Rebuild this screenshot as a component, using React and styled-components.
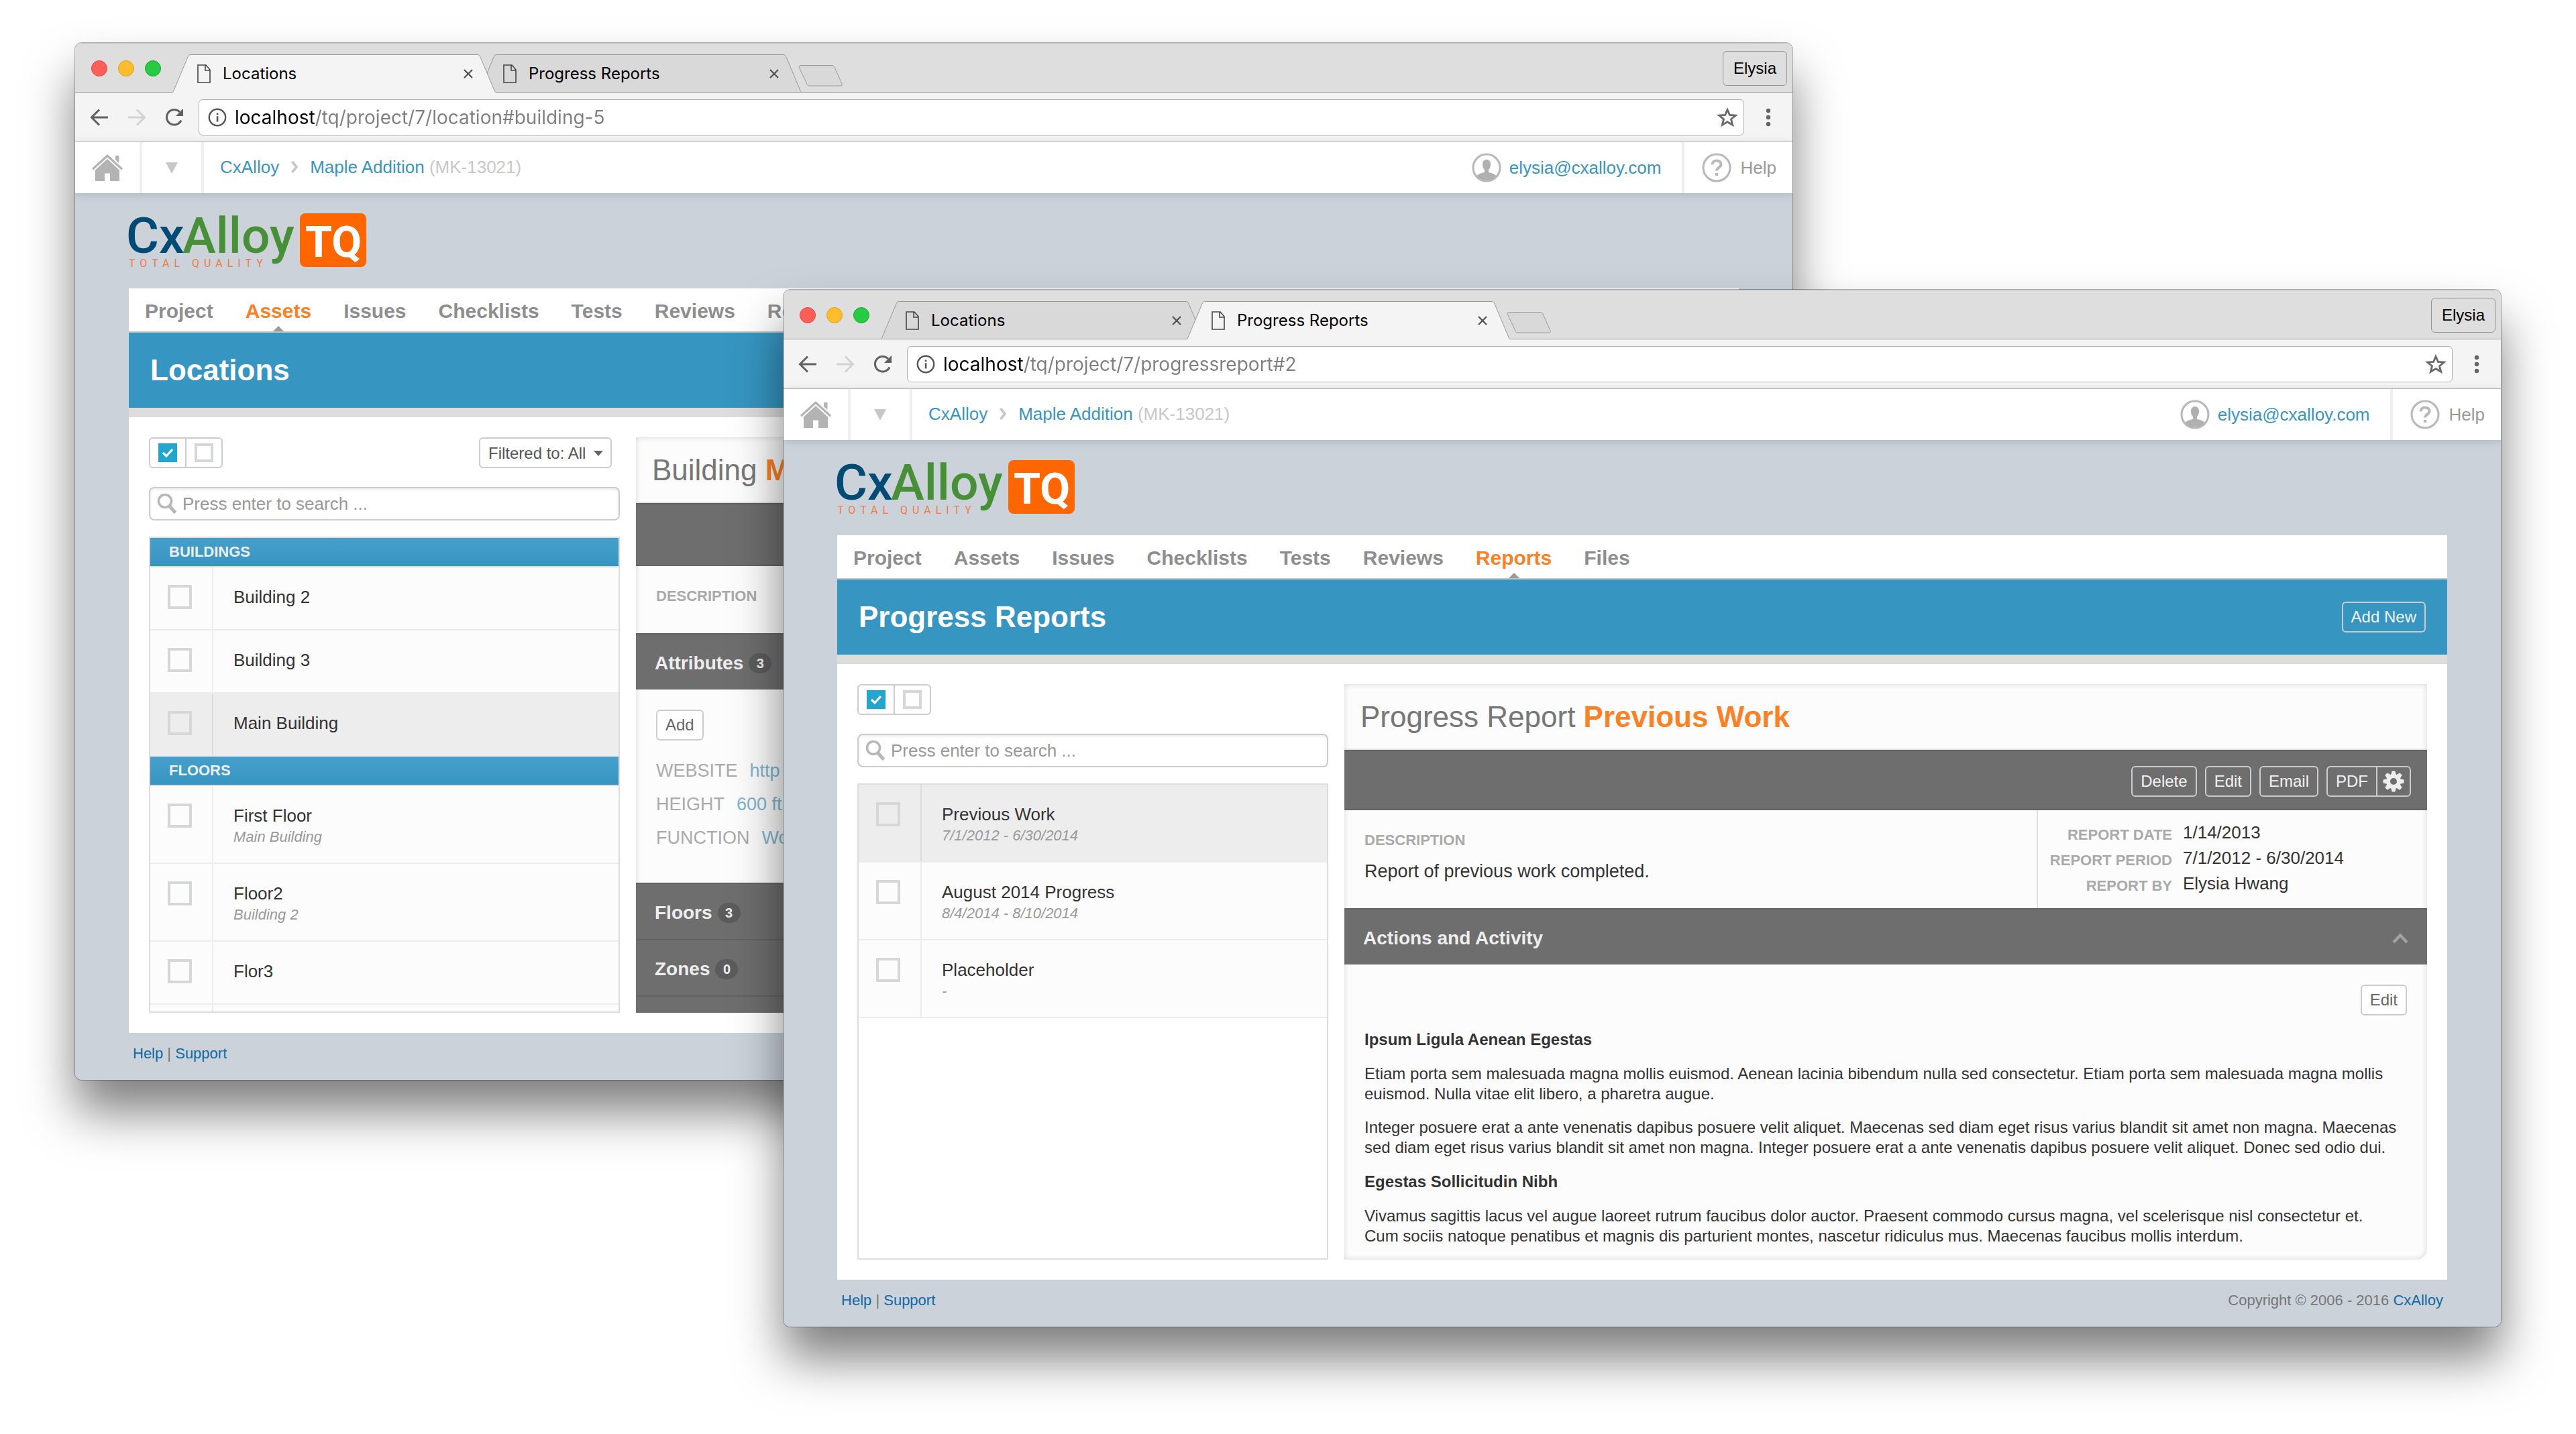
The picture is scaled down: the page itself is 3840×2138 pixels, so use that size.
import React from "react";
import styled, { createGlobalStyle, css } from "styled-components";

const GlobalStyle = createGlobalStyle`
  *, *::before, *::after { box-sizing: border-box; }
  body { margin: 0; background: #fff; }
  button, input, select { font: inherit; color: inherit; margin: 0; }
  button { padding: 0; border: 0; background: none; cursor: pointer; }
  a { color: inherit; text-decoration: none; }
  h1, h2, h3, p, ul, dl, dd { margin: 0; padding: 0; }
  svg { display: block; }
`;

const systemFont = `Inter, Roboto, sans-serif`;
const pageFont = `"Liberation Sans", Arial, sans-serif`;

/* ---------- desktop and browser window ---------- */

const Desktop = styled.main`
  position: relative;
  min-height: 100vh;
  overflow: hidden;
  font-family: ${pageFont};
`;

const BrowserFrame = styled.section`
  position: absolute;
  width: calc(100% * 2 / 3);
  top: ${(p) => (p.$front ? "432px" : "64px")};
  ${(p) => (p.$front ? "right: 112px;" : "left: 112px;")}
  border-radius: 10px;
  box-shadow: 0 0 0 1px rgba(0, 0, 0, 0.3), 0 48px 72px rgba(0, 0, 0, 0.5);
`;

const FrameClip = styled.div`
  display: flex;
  flex-direction: column;
  border-radius: 10px;
  overflow: hidden;
  background: #cbd2da;
`;

const TabStrip = styled.header`
  display: flex;
  align-items: flex-end;
  height: 74px;
  background: #dedede;
  box-shadow: inset 0 1px 0 #c4c4c4, inset 0 -1px 0 #999;
  font-family: ${systemFont};
`;

const WindowControls = styled.div`
  display: flex;
  gap: 16px;
  align-self: flex-start;
  padding: 26px 16px 0 24px;
`;

const ControlDot = styled.button`
  width: 24px;
  height: 24px;
  border-radius: 50%;
  background: ${(p) => p.$fill};
  border: 1px solid ${(p) => p.$edge};
`;

const Tabs = styled.div`
  display: flex;
`;

const TabShell = styled.div`
  position: relative;
  z-index: ${(p) => (p.$active ? 2 : 1)};
  display: flex;
  align-items: center;
  width: 484px;
  height: 57px;
  padding: 0 28px 0 38px;
  & + & { margin-left: -28px; }
`;

const TabShape = styled.svg`
  position: absolute;
  inset: 0;
  z-index: -1;
`;

const TabLabel = styled.button`
  flex: 1;
  display: flex;
  align-items: center;
  gap: 18px;
  font-size: 24px;
  line-height: 28px;
  color: #000;
`;

const IconButton = styled.button`
  display: grid;
  place-items: center;
  width: 28px;
  height: 28px;
`;

const NewTabButton = styled.button`
  margin: 0 0 9px -6px;
`;

const ProfileButton = styled.button`
  align-self: flex-start;
  margin: 12px 8px 0 auto;
  height: 52px;
  padding: 0 15px;
  border: 1px solid #979797;
  border-radius: 6px;
  font-family: ${pageFont};
  font-size: 24px;
  color: #000;
`;

const Toolbar = styled.div`
  display: flex;
  align-items: center;
  gap: 28px;
  height: 74px;
  padding: 0 22px;
  background: #f4f4f4;
  border-bottom: 1px solid #bdbdbd;
`;

const AddressBar = styled.label`
  flex: 1;
  display: flex;
  align-items: center;
  gap: 12px;
  height: 54px;
  margin: 0 -6px;
  padding: 0 8px 0 13px;
  background: #fff;
  border: 1px solid #b0b0b0;
  border-radius: 6px;
`;

const AddressInput = styled.input`
  flex: 1;
  height: 40px;
  padding: 0;
  border: 0;
  outline: 0;
  font-family: ${systemFont};
  font-size: 28px;
  color: #7f7f7f;
  background: linear-gradient(to right, #000 120px, #7f7f7f 120px);
  background-clip: text;
  -webkit-text-fill-color: transparent;
`;

/* ---------- site header ---------- */

const SiteHeader = styled.header`
  position: relative;
  z-index: 1;
  display: flex;
  height: 76px;
  background: #fff;
  box-shadow: 0 2px 12px rgba(0, 0, 0, 0.14);
  font-size: 26px;
`;

const HeaderCell = styled.button`
  display: grid;
  place-items: center;
  width: ${(p) => p.$width}px;
  border-right: 4px solid #efefef;
`;

const Breadcrumbs = styled.nav`
  display: flex;
  align-items: center;
  gap: 18px;
  padding: 0 0 2px 24px;
  color: #c8c8c8;
`;

const BlueLink = styled.a`
  color: #3696c1;
`;

const UserLink = styled(BlueLink)`
  display: flex;
  align-items: center;
  gap: 12px;
  margin-left: auto;
  padding-right: 30px;
`;

const HelpLink = styled.a`
  display: flex;
  align-items: center;
  gap: 14px;
  padding: 0 24px 0 26px;
  border-left: 4px solid #efefef;
  color: #999;
`;

/* ---------- page ---------- */

const Page = styled.div`
  padding: 30px 80px 0;
`;

const LogoMark = styled.svg`
  overflow: visible;
`;

const Content = styled.div`
  margin-top: 32px;
  background: #fff;
`;

const MainNav = styled.nav`
  display: flex;
  height: 66px;
  border-bottom: 2px solid #c4c4c4;
`;

const NavItem = styled.a`
  position: relative;
  display: flex;
  align-items: center;
  padding: 4px 24px 0;
  font-size: 30px;
  font-weight: bold;
  color: ${(p) => (p.$active ? "#fc8124" : "#8e8e8e")};
  ${(p) =>
    p.$active &&
    css`
      &::after {
        content: "";
        position: absolute;
        left: calc(50% - 8px);
        bottom: 0;
        border: 8px solid transparent;
        border-top: 0;
        border-bottom-color: #999;
      }
    `}
`;

const TitleBar = styled.div`
  display: flex;
  align-items: center;
  justify-content: space-between;
  height: 126px;
  padding: 0 32px;
  background: #3696c1;
  border-bottom: 14px solid #ddd;
`;

const PageTitle = styled.h1`
  font-size: 44px;
  line-height: 50px;
  color: #fff;
`;

const buttonTones = {
  light: css`border-color: #ccc; color: #666; background: #fff;`,
  dark: css`border-color: #ccc; color: #f2f2f2;`,
};

const Button = styled.button`
  height: 46px;
  padding: 0 ${(p) => (p.$compact ? 8 : 12)}px;
  border: 2px solid;
  border-radius: 6px;
  font-size: 24px;
  line-height: 28px;
  white-space: nowrap;
  ${(p) => buttonTones[p.$tone]}
`;

const ButtonGroup = styled.div`
  display: flex;
  & > button { display: grid; place-items: center; }
  & > button:first-child { border-radius: 6px 0 0 6px; border-right-width: 1px; }
  & > button:last-child { border-radius: 0 6px 6px 0; border-left-width: 1px; }
`;

const Panes = styled.div`
  display: flex;
  gap: 24px;
  height: 918px;
  padding: 30px;
`;

const ListPane = styled.aside`
  flex: 0 0 702px;
  display: flex;
  flex-direction: column;
`;

const ListTools = styled.div`
  display: flex;
  justify-content: space-between;
  padding-right: 12px;
`;

const FilterBox = styled.label`
  position: relative;
  svg { position: absolute; right: 13px; top: 20px; pointer-events: none; }
`;

const FilterSelect = styled.select`
  appearance: none;
  width: 198px;
  height: 46px;
  padding: 0 0 0 12px;
  border: 2px solid #ccc;
  border-radius: 6px;
  background: #fff;
  font-size: 24px;
  color: #555;
`;

const SearchBox = styled.label`
  display: flex;
  align-items: center;
  gap: 8px;
  height: 50px;
  margin-top: 28px;
  padding: 0 10px;
  border: 2px solid #ccc;
  border-radius: 8px;
  box-shadow: inset 0 2px 4px rgba(0, 0, 0, 0.08);
`;

const SearchInput = styled.input`
  flex: 1;
  height: 40px;
  padding: 0;
  border: 0;
  outline: 0;
  background: none;
  font-size: 26px;
  &::placeholder { color: #999; opacity: 1; }
`;

const List = styled.div`
  flex: 1;
  min-height: 0;
  margin-top: 24px;
  border: 2px solid #ddd;
  overflow: hidden;
`;

const GroupHeading = styled.h2`
  height: 44px;
  padding-left: 28px;
  border-bottom: 2px solid #d8dde0;
  background: linear-gradient(#469fcb, #3696c1);
  background-clip: padding-box;
  font-size: 22px;
  line-height: 42px;
  color: #eee;
`;

const Rows = styled.ul`
  list-style: none;
`;

const Row = styled.li`
  display: flex;
  min-height: 94px;
  border-bottom: 2px solid #ededed;
  background: ${(p) => (p.$selected ? "#ededed" : "#fcfcfc")};
`;

const CheckCell = styled.div`
  width: 94px;
  padding: 26px 0 0 26px;
  border-right: 2px solid ${(p) => (p.$selected ? "#dcdcdc" : "#ededed")};
`;

const Checkbox = styled.input`
  appearance: none;
  display: block;
  width: 36px;
  height: 36px;
  margin: 0;
  border: 4px solid #d6d7d9;
`;

const RowLabel = styled.label`
  flex: 1;
  padding: 28px 0 22px 30px;
  line-height: 32px;
`;

const RowTitle = styled.div`
  font-size: 26px;
  color: #333;
`;

const RowNote = styled.div`
  font-size: 22px;
  font-style: italic;
  color: #999;
`;

/* ---------- detail pane ---------- */

const Detail = styled.article`
  flex: 1;
  min-width: 0;
  overflow: hidden;
  border-radius: 0 0 16px 0;
  background: #fcfcfc;
  box-shadow: inset 0 0 8px rgba(0, 0, 0, 0.16);
`;

const DetailTitle = styled.h2`
  height: 98px;
  padding-left: 24px;
  border-bottom: 2px solid #e4e4e4;
  font-size: 44px;
  font-weight: normal;
  line-height: 97px;
  white-space: nowrap;
  color: #777;
  strong { color: #fc8124; }
`;

const ActionBar = styled.div`
  display: flex;
  align-items: center;
  justify-content: flex-end;
  gap: 12px;
  height: ${(p) => (p.$tall ? 94 : 90)}px;
  padding: 4px 24px 0;
  border: solid #626262;
  border-width: 2px 0;
  background: #6e6e6e;
`;

const Summary = styled.div`
  display: flex;
  min-height: 100px;
`;

const Description = styled.div`
  flex: 1;
  padding: 32px 30px 38px;
  font-size: 27px;
  line-height: 34px;
  color: #333;
  p { margin-top: 16px; }
`;

const FieldLabel = styled.h3`
  font-size: 22px;
  line-height: 26px;
  color: #aaa;
`;

const Meta = styled.dl`
  flex: 0 0 582px;
  display: grid;
  grid-template-columns: 200px 1fr;
  grid-auto-rows: 38px;
  column-gap: 16px;
  padding-top: 14px;
  border-left: 2px solid #e0e0e0;
  dt {
    align-self: end;
    font-size: 22px;
    font-weight: bold;
    line-height: 30px;
    text-align: right;
    color: #aaa;
  }
  dd {
    font-size: 26px;
    line-height: 38px;
    color: #333;
  }
`;

const SectionBar = styled.h3`
  display: flex;
  align-items: center;
  gap: 8px;
  height: 84px;
  padding: 4px 28px 0 28px;
  border-top: 2px solid #626262;
  background: #6e6e6e;
  font-size: 28px;
  color: #eee;
  button { margin-left: auto; }
`;

const Badge = styled.span`
  min-width: 34px;
  padding: 0 10px;
  border-radius: 16px;
  background: #5c5c5c;
  font-size: 20px;
  line-height: 30px;
  text-align: center;
`;

const AttributePanel = styled.div`
  padding: 30px 30px 42px;
  dl { margin-top: 20px; }
`;

const Attribute = styled.div`
  display: flex;
  gap: 18px;
  font-size: 27px;
  line-height: 50px;
  white-space: nowrap;
  color: #aaa;
  dd { color: #7fb5d1; }
`;

const Prose = styled.div`
  display: flex;
  flex-direction: column;
  gap: 20px;
  padding: 30px;
  font-size: 24px;
  line-height: 30px;
  color: #333;
  button { align-self: flex-end; }
  h4 { margin: 0; line-height: 32px; }
`;

const Footer = styled.footer`
  display: flex;
  justify-content: space-between;
  height: 70px;
  padding: 18px 6px 0;
  font-size: 22px;
  line-height: 26px;
  color: #777;
  a { color: #0f69a3; }
`;

/* ---------- icons ---------- */

const DocumentIcon = () => (
  <svg width="20" height="28" viewBox="0 0 20 28" fill="none" stroke="#444" strokeWidth="1.6">
    <path d="M1 1H13L19 8V27H1Z M12 1V9H19" />
  </svg>
);

const CloseIcon = () => (
  <svg width="14" height="14" viewBox="0 0 14 14" stroke="#505050" strokeWidth="2.2">
    <path d="M1 1L13 13M13 1L1 13" />
  </svg>
);

const ArrowIcon = ({ forward }) => (
  <svg width="28" height="28" viewBox="0 0 28 28" fill="none" stroke={forward ? "#d2d2d2" : "#606060"} strokeWidth="3">
    <path d={forward ? "M1 14H25M14 2.500L25.500 14L14 25.500" : "M27 14H3M14 2.500L2.500 14L14 25.500"} />
  </svg>
);

const ReloadIcon = () => (
  <svg width="28" height="28" viewBox="0 0 28 28">
    <path d="M24 18.500A11.300 11.300 0 1 1 22 6" fill="none" stroke="#606060" strokeWidth="3" />
    <path d="M27 1V12H16Z" fill="#606060" />
  </svg>
);

const InfoIcon = () => (
  <svg width="28" height="28" viewBox="0 0 28 28">
    <circle cx="14" cy="14" r="12.200" fill="none" stroke="#555" strokeWidth="2.400" />
    <path d="M12.800 7.500h2.600v2.700h-2.600zM12.800 12.200h2.600v8.400h-2.600z" fill="#555" />
  </svg>
);

const StarIcon = () => (
  <svg width="32" height="30" viewBox="0 0 32 30">
    <path d="M16 3.500L19.400 11.400L28.400 12.100L21.500 17.700L23.700 26.300L16 21.700L8.300 26.300L10.500 17.700L3.600 12.100L12.600 11.400Z" fill="none" stroke="#6a6a6a" strokeWidth="2.800" />
  </svg>
);

const MenuIcon = () => (
  <svg width="8" height="28" viewBox="0 0 8 28" fill="#646464">
    <circle cx="4" cy="4" r="3.200" />
    <circle cx="4" cy="14" r="3.200" />
    <circle cx="4" cy="24" r="3.200" />
  </svg>
);

const HomeIcon = () => (
  <svg width="48" height="42" viewBox="0 0 48 42" fill="#b3b3b3">
    <path d="M36 3h5.500v11L36 9z" />
    <path d="M24 1L47 22l-2 2.400L24 5.500L3 24.400L1 22Z" />
    <path d="M24 8L42 24.500V41H28V29.500H20V41H6V24.500Z" />
  </svg>
);

const Caret = ({ width, height, fill }) => (
  <svg width={width} height={height} viewBox="0 0 10 10" preserveAspectRatio="none" fill={fill}>
    <path d="M0 0H10L5 10Z" />
  </svg>
);

const CrumbIcon = () => (
  <svg width="10" height="18" viewBox="0 0 10 18" fill="none" stroke="#c8c8c8" strokeWidth="3.600">
    <path d="M1.500 1L8 9L1.500 17" />
  </svg>
);

const UserIcon = () => (
  <svg width="44" height="44" viewBox="0 0 44 44">
    <circle cx="22" cy="22" r="20" fill="#fff" stroke="#b8b8b8" strokeWidth="3" />
    <path d="M22 10c4 0 6 3 6 7c0 4-1 6-3 8v4c5 1 9 2.500 11.500 5a19 19 0 0 1-29 0C10 31.500 14 30 19 29v-4c-2-2-3-4-3-8c0-4 2-7 6-7z" fill="#b0b0b0" />
  </svg>
);

const HelpIcon = () => (
  <svg width="44" height="44" viewBox="0 0 44 44" fill="none" stroke="#b8b8b8">
    <circle cx="22" cy="22" r="20" strokeWidth="3" />
    <path d="M15.500 17.500c0-4 3-6 6.500-6s6.500 2 6.500 5.500c0 4.500-6.500 5-6.500 9.500" strokeWidth="4" />
    <path d="M19.800 30h4.400v4h-4.400z" fill="#b8b8b8" stroke="none" />
  </svg>
);

const CheckedIcon = () => (
  <svg width="28" height="28" viewBox="0 0 28 28">
    <path d="M0 0H28V28H0Z" fill="#22a5cf" />
    <path d="M7 14l5 5l9-10" fill="none" stroke="#fff" strokeWidth="3.200" />
  </svg>
);

const UncheckedIcon = () => (
  <svg width="28" height="28" viewBox="0 0 28 28">
    <path d="M2 2H26V26H2Z" fill="none" stroke="#d6d7d9" strokeWidth="4" />
  </svg>
);

const SearchIcon = () => (
  <svg width="30" height="32" viewBox="0 0 30 32" fill="none" stroke="#b8b8b8">
    <circle cx="12" cy="12" r="9.500" strokeWidth="3.600" />
    <path d="M18.500 19.500L27.500 29.500" strokeWidth="5" />
  </svg>
);

const GearIcon = () => (
  <svg width="32" height="32" viewBox="-16 -16 32 32">
    <g fill="#eee">
      {[0, 45, 90, 135, 180, 225, 270, 315].map((angle) => (
        <path key={angle} d="M-4 -9L-2.400 -15.500H2.400L4 -9Z" transform={`rotate(${angle})`} />
      ))}
    </g>
    <circle r="8" fill="none" stroke="#eee" strokeWidth="6" />
  </svg>
);

const CollapseIcon = () => (
  <svg width="24" height="16" viewBox="0 0 24 16" fill="none" stroke="#a2a2a2" strokeWidth="4.500">
    <path d="M2 14L12 3.500L22 14" />
  </svg>
);

const Logo = () => (
  <LogoMark width="354" height="80" viewBox="0 0 354 80" fontFamily="Roboto, sans-serif">
    <g fontSize="75" fontWeight="500">
      <text x="-4" y="59" fill="#004b73">Cx</text>
      <text x="80" y="59" fill="#479037">Alloy</text>
    </g>
    <text x="0" y="80" fontSize="16" letterSpacing="7" fill="#ee7c45">TOTAL QUALITY</text>
    <rect x="255" y="0" width="99" height="80" rx="8" fill="#ff6600" />
    <text x="305" y="65" fontSize="65" fontWeight="700" textAnchor="middle" fill="#fff">TQ</text>
  </LogoMark>
);

/* ---------- composition ---------- */

const BrowserTab = ({ title, active }) => (
  <TabShell $active={active}>
    <TabShape width="484" height="57" viewBox="0 0 484 57">
      <path
        d="M0 57C2 57 2.500 55 3 54L24 4C25 1.500 26 0.500 29 0.500H455C458 0.500 459 1.500 460 4L481 54C481.500 55 482 57 484 57Z"
        fill={active ? "#f4f4f4" : "#d9d9d9"}
      />
      <path
        d="M0 57C2 57 2.500 55 3 54L24 4C25 1.500 26 0.500 29 0.500H455C458 0.500 459 1.500 460 4L481 54C481.500 55 482 57 484 57"
        fill="none"
        stroke="#999"
      />
      {!active && <path d="M0 56.500H484" stroke="#999" />}
    </TabShape>
    <TabLabel>
      <DocumentIcon />
      {title}
    </TabLabel>
    <IconButton aria-label={`Close ${title}`}>
      <CloseIcon />
    </IconButton>
  </TabShell>
);

const Browser = ({ front, tab, url, children }) => (
  <BrowserFrame $front={front}>
    <FrameClip>
      <TabStrip>
        <WindowControls>
          <ControlDot $fill="#ff5f57" $edge="#e2463f" aria-label="Close window" />
          <ControlDot $fill="#ffbd2e" $edge="#e1a116" aria-label="Minimize window" />
          <ControlDot $fill="#28ca41" $edge="#12ac28" aria-label="Zoom window" />
        </WindowControls>
        <Tabs>
          {["Locations", "Progress Reports"].map((name) => (
            <BrowserTab key={name} title={name} active={name === tab} />
          ))}
        </Tabs>
        <NewTabButton aria-label="New tab">
          <svg width="66" height="32" viewBox="0 0 66 32">
            <path d="M4 0.500H50C52 0.500 53 1 54 3L65 28C65.500 30 65 31 63 31H17C15 31 14 30.500 13 28.500L1.500 4C0.500 2 1.500 0.500 4 0.500Z" fill="#d9d9d9" stroke="#999" />
          </svg>
        </NewTabButton>
        <ProfileButton>Elysia</ProfileButton>
      </TabStrip>
      <Toolbar>
        <IconButton aria-label="Back"><ArrowIcon /></IconButton>
        <IconButton aria-label="Forward"><ArrowIcon forward /></IconButton>
        <IconButton aria-label="Reload"><ReloadIcon /></IconButton>
        <AddressBar>
          <InfoIcon />
          <AddressInput aria-label="Address" defaultValue={url} />
          <StarIcon />
        </AddressBar>
        <IconButton aria-label="Menu"><MenuIcon /></IconButton>
      </Toolbar>
      {children}
    </FrameClip>
  </BrowserFrame>
);

const navItems = ["Project", "Assets", "Issues", "Checklists", "Tests", "Reviews", "Reports", "Files"];

const Site = ({ section, title, action, children }) => (
  <>
    <SiteHeader>
      <HeaderCell $width={100} aria-label="Home"><HomeIcon /></HeaderCell>
      <HeaderCell $width={92} aria-label="Projects"><Caret width="18" height="17" fill="#c8c8c8" /></HeaderCell>
      <Breadcrumbs>
        <BlueLink href="#account">CxAlloy</BlueLink>
        <CrumbIcon />
        <span><BlueLink href="#project">Maple Addition</BlueLink> (MK-13021)</span>
      </Breadcrumbs>
      <UserLink href="#profile"><UserIcon />elysia@cxalloy.com</UserLink>
      <HelpLink href="#help"><HelpIcon />Help</HelpLink>
    </SiteHeader>
    <Page>
      <Logo />
      <Content>
        <MainNav>
          {navItems.map((item) => (
            <NavItem key={item} href={`#${item.toLowerCase()}`} $active={item === section}>{item}</NavItem>
          ))}
        </MainNav>
        <TitleBar>
          <PageTitle>{title}</PageTitle>
          {action}
        </TitleBar>
        <Panes>{children}</Panes>
      </Content>
      <Footer>
        <span><a href="#help">Help</a> | <a href="#support">Support</a></span>
        <span>Copyright © 2006 - 2016 <a href="#cxalloy">CxAlloy</a></span>
      </Footer>
    </Page>
  </>
);

const ItemList = ({ groups, filter }) => (
  <ListPane>
    <ListTools>
      <ButtonGroup>
        <Button $tone="light" aria-label="Select all"><CheckedIcon /></Button>
        <Button $tone="light" aria-label="Select none"><UncheckedIcon /></Button>
      </ButtonGroup>
      {filter && (
        <FilterBox>
          <FilterSelect aria-label="Filter">
            <option>{filter}</option>
          </FilterSelect>
          <Caret width="14" height="8" fill="#666" />
        </FilterBox>
      )}
    </ListTools>
    <SearchBox>
      <SearchIcon />
      <SearchInput aria-label="Search" placeholder="Press enter to search ..." />
    </SearchBox>
    <List>
      {groups.map((group, g) => (
        <React.Fragment key={g}>
          {group.name && <GroupHeading>{group.name}</GroupHeading>}
          <Rows>
            {group.rows.map((row) => (
              <Row key={row.id} $selected={row.selected}>
                <CheckCell $selected={row.selected}>
                  <Checkbox type="checkbox" id={row.id} />
                </CheckCell>
                <RowLabel htmlFor={row.id}>
                  <RowTitle>{row.title}</RowTitle>
                  {row.note && <RowNote>{row.note}</RowNote>}
                </RowLabel>
              </Row>
            ))}
          </Rows>
        </React.Fragment>
      ))}
    </List>
  </ListPane>
);

const locationGroups = [
  {
    name: "BUILDINGS",
    rows: [
      { id: "building-2", title: "Building 2" },
      { id: "building-3", title: "Building 3" },
      { id: "building-5", title: "Main Building", selected: true },
    ],
  },
  {
    name: "FLOORS",
    rows: [
      { id: "floor-1", title: "First Floor", note: "Main Building" },
      { id: "floor-2", title: "Floor2", note: "Building 2" },
      { id: "floor-3", title: "Flor3" },
      { id: "floor-4", title: "" },
    ],
  },
];

const reportGroups = [
  {
    rows: [
      { id: "report-2", title: "Previous Work", note: "7/1/2012 - 6/30/2014", selected: true },
      { id: "report-3", title: "August 2014 Progress", note: "8/4/2014 - 8/10/2014" },
      { id: "report-4", title: "Placeholder", note: "-" },
    ],
  },
];

const attributes = [
  ["WEBSITE", "http"],
  ["HEIGHT", "600 ft"],
  ["FUNCTION", "Work"],
];

const reportFacts = [
  ["REPORT DATE", "1/14/2013"],
  ["REPORT PERIOD", "7/1/2012 - 6/30/2014"],
  ["REPORT BY", "Elysia Hwang"],
];

export default function App() {
  return (
    <Desktop>
      <GlobalStyle />
      <Browser tab="Locations" url="localhost/tq/project/7/location#building-5">
        <Site section="Assets" title="Locations">
          <ItemList groups={locationGroups} filter="Filtered to: All" />
          <Detail>
            <DetailTitle>Building <strong>Main</strong></DetailTitle>
            <ActionBar $tall />
            <Summary>
              <Description><FieldLabel>DESCRIPTION</FieldLabel></Description>
            </Summary>
            <SectionBar>Attributes <Badge>3</Badge></SectionBar>
            <AttributePanel>
              <Button $tone="light">Add</Button>
              <dl>
                {attributes.map(([name, value]) => (
                  <Attribute key={name}><dt>{name}</dt><dd>{value}</dd></Attribute>
                ))}
              </dl>
            </AttributePanel>
            <SectionBar>Floors <Badge>3</Badge></SectionBar>
            <SectionBar>Zones <Badge>0</Badge></SectionBar>
            <SectionBar />
          </Detail>
        </Site>
      </Browser>
      <Browser front tab="Progress Reports" url="localhost/tq/project/7/progressreport#2">
        <Site section="Reports" title="Progress Reports" action={<Button $tone="dark">Add New</Button>}>
          <ItemList groups={reportGroups} />
          <Detail>
            <DetailTitle>Progress Report <strong>Previous Work</strong></DetailTitle>
            <ActionBar>
              <Button $tone="dark">Delete</Button>
              <Button $tone="dark">Edit</Button>
              <Button $tone="dark">Email</Button>
              <ButtonGroup>
                <Button $tone="dark">PDF</Button>
                <Button $tone="dark" $compact aria-label="PDF settings"><GearIcon /></Button>
              </ButtonGroup>
            </ActionBar>
            <Summary>
              <Description>
                <FieldLabel>DESCRIPTION</FieldLabel>
                <p>Report of previous work completed.</p>
              </Description>
              <Meta>
                {reportFacts.map(([name, value]) => (
                  <React.Fragment key={name}><dt>{name}</dt><dd>{value}</dd></React.Fragment>
                ))}
              </Meta>
            </Summary>
            <SectionBar>
              Actions and Activity
              <button aria-label="Collapse"><CollapseIcon /></button>
            </SectionBar>
            <Prose>
              <Button $tone="light">Edit</Button>
              <h4>Ipsum Ligula Aenean Egestas</h4>
              <p>Etiam porta sem malesuada magna mollis euismod. Aenean lacinia bibendum nulla sed consectetur. Etiam porta sem malesuada magna mollis euismod. Nulla vitae elit libero, a pharetra augue.</p>
              <p>Integer posuere erat a ante venenatis dapibus posuere velit aliquet. Maecenas sed diam eget risus varius blandit sit amet non magna. Maecenas sed diam eget risus varius blandit sit amet non magna. Integer posuere erat a ante venenatis dapibus posuere velit aliquet. Donec sed odio dui.</p>
              <h4>Egestas Sollicitudin Nibh</h4>
              <p>Vivamus sagittis lacus vel augue laoreet rutrum faucibus dolor auctor. Praesent commodo cursus magna, vel scelerisque nisl consectetur et. Cum&nbsp;sociis natoque penatibus et magnis dis parturient montes, nascetur ridiculus mus. Maecenas faucibus mollis interdum.</p>
            </Prose>
          </Detail>
        </Site>
      </Browser>
    </Desktop>
  );
}
